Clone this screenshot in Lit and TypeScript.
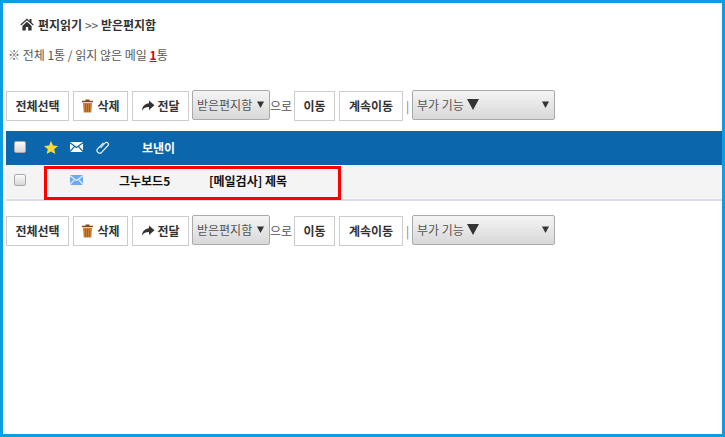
import { LitElement, html, css } from "lit";
import { customElement } from "lit/decorators.js";

const trash = html`<svg class="ic" width="13" height="14" viewBox="0 0 13 14"><path fill="#7a4a20" d="M4.5 0.5h4v1.2h3.5v1.6H1V1.7h3.5z"/><path fill="#c8803c" d="M2 4h9l-.7 9.5H2.7z"/><path stroke="#6b6b6b" stroke-width="1" d="M4.5 5v8M6.5 5v8M8.5 5v8"/></svg>`;
const arrow = html`<svg class="ic" width="14" height="12" viewBox="0 0 14 12"><path fill="#333" d="M8 0.5l5.5 4.7L8 10V7C4.8 7 2.5 8 1 10.5 1.3 6.5 3.8 3.6 8 3.2z"/></svg>`;
const home = html`<svg width="14" height="13" viewBox="0 0 14 13"><path fill="#333" d="M7 .5L.3 6.6l.8.9L7 2.3l5.9 5.2.8-.9-2.2-2V1h-2v2.1zM2.4 7.9V12.6h3.4V9h2.4v3.6h3.4V7.9L7 3.7z"/></svg>`;
const env = (bg: string, fg: string) => html`<svg width="13" height="10" viewBox="0 0 13 10"><rect width="13" height="10" rx="1" fill="${bg}"/><path d="M0 .7l6.5 4.8L13 .7M0 9.5l4.6-5.2M13 9.5L8.4 4.3" fill="none" stroke="${fg}" stroke-width="1.2"/></svg>`;
const caret = html`<svg class="car" width="7" height="7" viewBox="0 0 7 7"><path fill="#333" d="M0 .5h7L3.5 7z"/></svg>`;
const bigCaret = html`<svg class="bigcar" width="12" height="11" viewBox="0 0 12 11"><path fill="#333" d="M0 0h12L6 11z"/></svg>`;

@customElement("app-root")
export class AppRoot extends LitElement {
  static styles = css`
    :host { display: block; }
    * { box-sizing: border-box; }
    .page {
      position: relative; width: 725px; height: 437px; border: 3px solid #0d9de3; background: #fff;
      padding: 0 0 0 3px; font-family: "Noto Sans CJK KR", "Noto Sans", sans-serif; font-size: 12px; color: #555;
      overflow: hidden;
    }
    .title { display: flex; align-items: center; gap: 4px; height: 18px; margin: 12px 0 0 14px; font-weight: 700; color: #333; }
    .title .sep { font-weight: 400; color: #555; }
    .info { height: 18px; margin: 13px 0 0 2px; line-height: 18px; }
    .info b { color: #d00; text-decoration: underline; font-weight: 700; }
    .toolbar { display: flex; align-items: center; height: 30px; }
    .t1 { margin-top: 26px; }
    .t2 { margin-top: 14px; }
    .btn {
      display: flex; align-items: center; justify-content: center; gap: 2px; height: 30px; margin-right: 4px;
      border: 1px solid #ccc; background: #fff; color: #333; font-weight: 700; font-size: 12px; padding: 0; margin-top: 1px;
    }
    .gap3 { gap: 3px; }
    .select {
      display: flex; align-items: center; justify-content: space-between; height: 30px; margin-top: -1px;
      border: 1px solid #aaa; border-radius: 2px; background: linear-gradient(#f4f4f4, #d8d8d8);
      color: #555; padding: 0 5px 0 4px; font-size: 12px;
    }
    .label { display: flex; align-items: center; gap: 3px; }
    .suffix { width: 24px; }
    .bar { width: 9px; text-align: center; color: #777; }
    .head { display: flex; align-items: center; height: 34px; width: 716px; margin-top: 11px; padding-bottom: 2px; background: #0b66ac; color: #fff; font-weight: 700; }
    .row { display: flex; align-items: center; height: 36px; width: 716px; padding-bottom: 4px; background: #f4f4f4; border-bottom: 2px solid #dcdce6; color: #111; font-weight: 700; }
    .chk { width: 12px; height: 12px; margin-left: 8px; border: 1px solid #aaa; border-radius: 2px; background: linear-gradient(#fbfbfb, #d8d8d8); flex: none; }
    .c { display: flex; justify-content: center; flex: none; width: 14px; }
    .star { margin-left: 18px; }
    .envh { margin-left: 11px; }
    .clip { margin-left: 13px; }
    .sender { margin-left: 32px; }
    .envr { margin-left: 43px; }
    .from { margin-left: 36px; width: 90px; }
    .mark {
      position: absolute; left: 41px; top: 163px; width: 297px; height: 34px; border: 3px solid #f00; pointer-events: none;
    }
    .w1 { width: 63px; }
    .w2 { width: 55px; }
    .w3 { width: 57px; margin-right: 3px; }
    .w4 { width: 78px; }
    .w5 { width: 41px; }
    .w6 { width: 64px; margin-right: 0; }
    .w7 { width: 143px; }
  `;

  private toolbar(cls: string) {
    return html`<div class="toolbar ${cls}">
      <div class="btn w1">전체선택</div>
      <div class="btn w2 gap3">${trash}삭제</div>
      <div class="btn w3">${arrow}전달</div>
      <div class="select w4"><span>받은편지함</span>${caret}</div>
      <div class="suffix">으로</div>
      <div class="btn w5">이동</div>
      <div class="btn w6">계속이동</div>
      <div class="bar">|</div>
      <div class="select w7"><span class="label">부가 기능 ${bigCaret}</span>${caret}</div>
    </div>`;
  }

  render() {
    return html`<div class="page">
      <div class="title">${home}<span>편지읽기 <span class="sep">&gt;&gt;</span> 받은편지함</span></div>
      <div class="info">※ 전체 1통 / 읽지 않은 메일 <b>1</b>통</div>
      ${this.toolbar("t1")}
      <div class="head">
        <span class="chk"></span>
        <span class="c star"><svg width="14" height="13" viewBox="0 0 14 13"><path fill="#fdd835" d="M7 0l2 4.6 5 .4-3.8 3.2L11.4 13 7 10.4 2.6 13l1.2-4.8L0 5l5-.4z"/></svg></span>
        <span class="c envh">${env("#fff", "#0b66ac")}</span>
        <span class="c clip"><svg width="14" height="13" viewBox="0 0 14 13"><path d="M4.5 7l4.6-5a1.9 1.9 0 0 1 2.8 2.6L5.6 11.3a2.6 2.6 0 0 1-3.8-3.6L7.5 1.8" fill="none" stroke="#fff" stroke-width="1.1"/></svg></span>
        <span class="sender">보낸이</span>
      </div>
      <div class="row">
        <span class="chk"></span>
        <span class="c envr">${env("#6aa9f4", "#e4eefc")}</span>
        <span class="from">그누보드5</span>
        <span>[메일검사] 제목</span>
      </div>
      ${this.toolbar("t2")}
      <div class="mark"></div>
    </div>`;
  }
}
